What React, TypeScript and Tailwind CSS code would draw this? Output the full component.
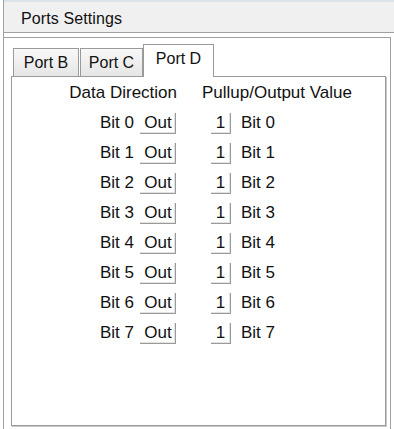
import React from "react";

function BitRow({ n }: { n: number }) {
  return (
    <div className="flex h-[30px] items-center">
      <div className="flex w-[164px] items-center justify-end">
        <span>Bit {n}</span>
        <div className="ml-[6px] flex h-[21px] w-[36px] items-center justify-center border-r border-b border-[#9a9a9a] bg-white pl-[1px] shadow-[inset_-1px_-1px_0_#e2e2e2]">
          Out
        </div>
      </div>
      <div className="ml-[35px] flex h-[21px] w-[20px] items-center justify-center border-r border-b border-[#9a9a9a] bg-white shadow-[inset_-1px_-1px_0_#e2e2e2]">
        1
      </div>
      <span className="ml-[10px]">Bit {n}</span>
    </div>
  );
}

export default function App() {
  const bits = [0, 1, 2, 3, 4, 5, 6, 7];
  return (
    <div className="h-[429px] w-[394px] overflow-hidden bg-white text-[16px] leading-[18px] text-[#111] font-['Liberation_Sans',Arial,sans-serif]">
      <div className="ml-[3px] flex h-[429px] flex-col border-l border-[#a0a0a0]">
        <div className="flex h-[33px] shrink-0 items-center border-t-2 border-b border-t-[#dce2ea] border-b-[#a0a0a0] bg-[#f0f0f0] pt-[4px] pl-[17px] tracking-[0.1px]">
          Ports Settings
        </div>
        <div className="mt-[4px] w-[387px] flex-1 border-t border-r border-[#a0a0a0] pt-[6px] pl-[7px]">
          <div className="relative z-10 flex h-[32px] items-end pl-[2px]">
            <div className="flex h-[28px] w-[66px] items-center justify-center border border-b-0 border-[#9a9a9a] bg-gradient-to-b from-[#f8f8f8] to-[#e6e6e6]">
              Port B
            </div>
            <div className="ml-[1px] flex h-[28px] w-[63px] items-center justify-center border border-b-0 border-[#9a9a9a] bg-gradient-to-b from-[#f8f8f8] to-[#e6e6e6]">
              Port C
            </div>
            <div className="-mb-px flex h-[33px] w-[71px] items-center justify-center border border-b-0 border-[#9a9a9a] bg-white pb-[4px]">
              Port D
            </div>
          </div>
          <div className="h-[350px] w-[375px] border border-[#9a9a9a] bg-white pt-[1px] text-[17px] shadow-[1px_1px_0_#c8c8c8]">
            <div className="flex h-[30px] items-center">
              <div className="flex w-[165px] justify-end">Data Direction</div>
              <span className="pl-[25px]">Pullup/Output Value</span>
            </div>
            {bits.map((b) => (
              <BitRow key={b} n={b} />
            ))}
          </div>
        </div>
      </div>
    </div>
  );
}
